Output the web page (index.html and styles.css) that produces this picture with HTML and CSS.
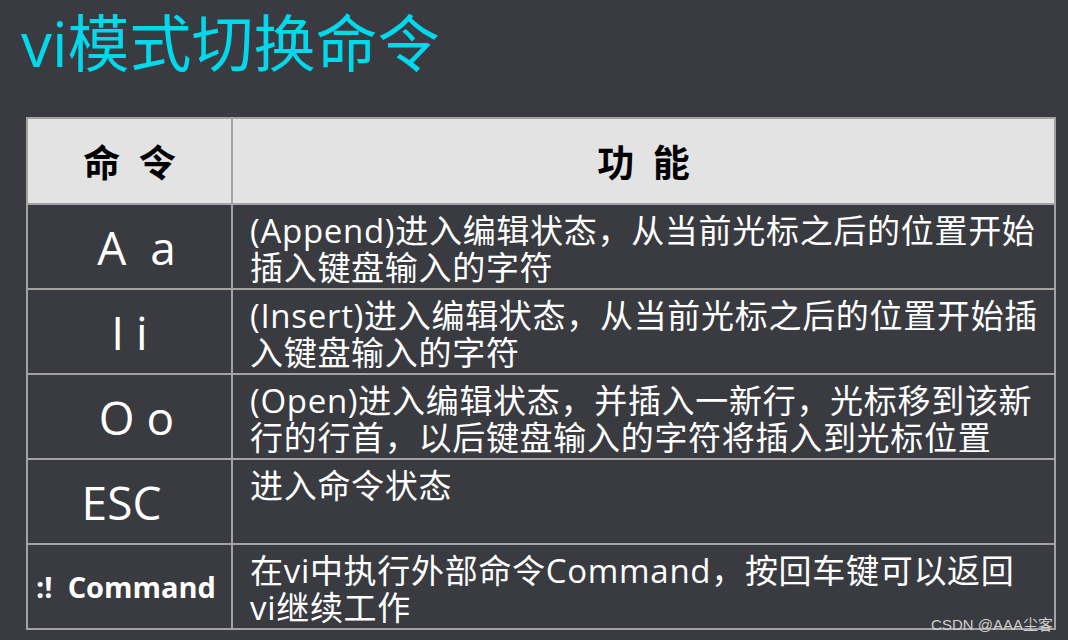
FILE: index.html
```html
<!DOCTYPE html>
<html lang="zh-CN">
<head>
<meta charset="utf-8">
<title>vi模式切换命令</title>
<link rel="stylesheet" href="styles.css">
</head>
<body>
<div class="slide">
  <h1 class="title">vi模式切换命令</h1>
  <table class="cmds">
    <colgroup><col class="c1"><col class="c2"></colgroup>
    <thead>
      <tr class="head"><th>命 令</th><th>功 能</th></tr>
    </thead>
    <tbody>
      <tr><td class="key">A&nbsp;&nbsp;a</td><td class="desc">(Append)进入编辑状态，从当前光标之后的位置开始<br>插入键盘输入的字符</td></tr>
      <tr><td class="key narrow">I i</td><td class="desc">(Insert)进入编辑状态，从当前光标之后的位置开始插<br>入键盘输入的字符</td></tr>
      <tr><td class="key">O o</td><td class="desc">(Open)进入编辑状态，并插入一新行，光标移到该新<br>行的行首，以后键盘输入的字符将插入到光标位置</td></tr>
      <tr><td class="key esc">ESC</td><td class="desc">进入命令状态</td></tr>
      <tr><td class="key bang">:!&nbsp;&nbsp;Command</td><td class="desc">在vi中执行外部命令Command，按回车键可以返回<br>vi继续工作</td></tr>
    </tbody>
  </table>
  <div class="mark">CSDN @AAA尘客</div>
</div>
</body>
</html>
```
FILE: styles.css
```css
html, body {
  margin: 0;
  padding: 0;
  background: #3a3b40;
}
.slide {
  position: relative;
  width: 1068px;
  height: 640px;
  overflow: hidden;
  font-family: "Open Sans", "Noto Sans CJK SC", sans-serif;
  color: #ffffff;
}
.title {
  margin: 0;
  padding: 0 0 0 21px;
  height: 117px;
  font-family: "Open Sans", "Noto Sans CJK SC", sans-serif;
  font-weight: 400;
  font-size: 62px;
  line-height: 86px;
  color: #00d9ec;
}
.cmds {
  margin-left: 26px;
  width: 1030px;
  border-collapse: collapse;
  table-layout: fixed;
}
.c1 { width: 205px; }
.cmds th, .cmds td {
  border: 2px solid #a3a3a3;
  padding: 0;
}
.head th {
  height: 84px;
  background: #e3e3e3;
  color: #000000;
  font-family: "Noto Sans CJK SC", sans-serif;
  font-weight: 700;
  font-size: 37px;
  letter-spacing: 5px;
  text-indent: 5px;
  text-align: center;
  vertical-align: middle;
}
.cmds tbody td {
  height: 76px;
}
.key {
  text-align: center;
  vertical-align: middle;
  font-size: 46px;
  padding-left: 14px !important;
}
.narrow {
  padding-left: 0 !important;
}
.esc {
  padding-left: 0 !important;
  padding-right: 16px !important;
}
.bang {
  text-align: left;
  padding-left: 8px !important;
  font-weight: 700;
  font-size: 29px;
}
.desc {
  vertical-align: top;
  padding: 7px 0 0 17px !important;
  font-size: 33px;
  line-height: 37px;
  letter-spacing: 0.7px;
  white-space: nowrap;
}
.mark {
  position: absolute;
  right: 15px;
  bottom: 6px;
  font-family: "Liberation Sans", "Noto Sans CJK SC", sans-serif;
  font-size: 15px;
  color: #cfcfcf;
}
```
